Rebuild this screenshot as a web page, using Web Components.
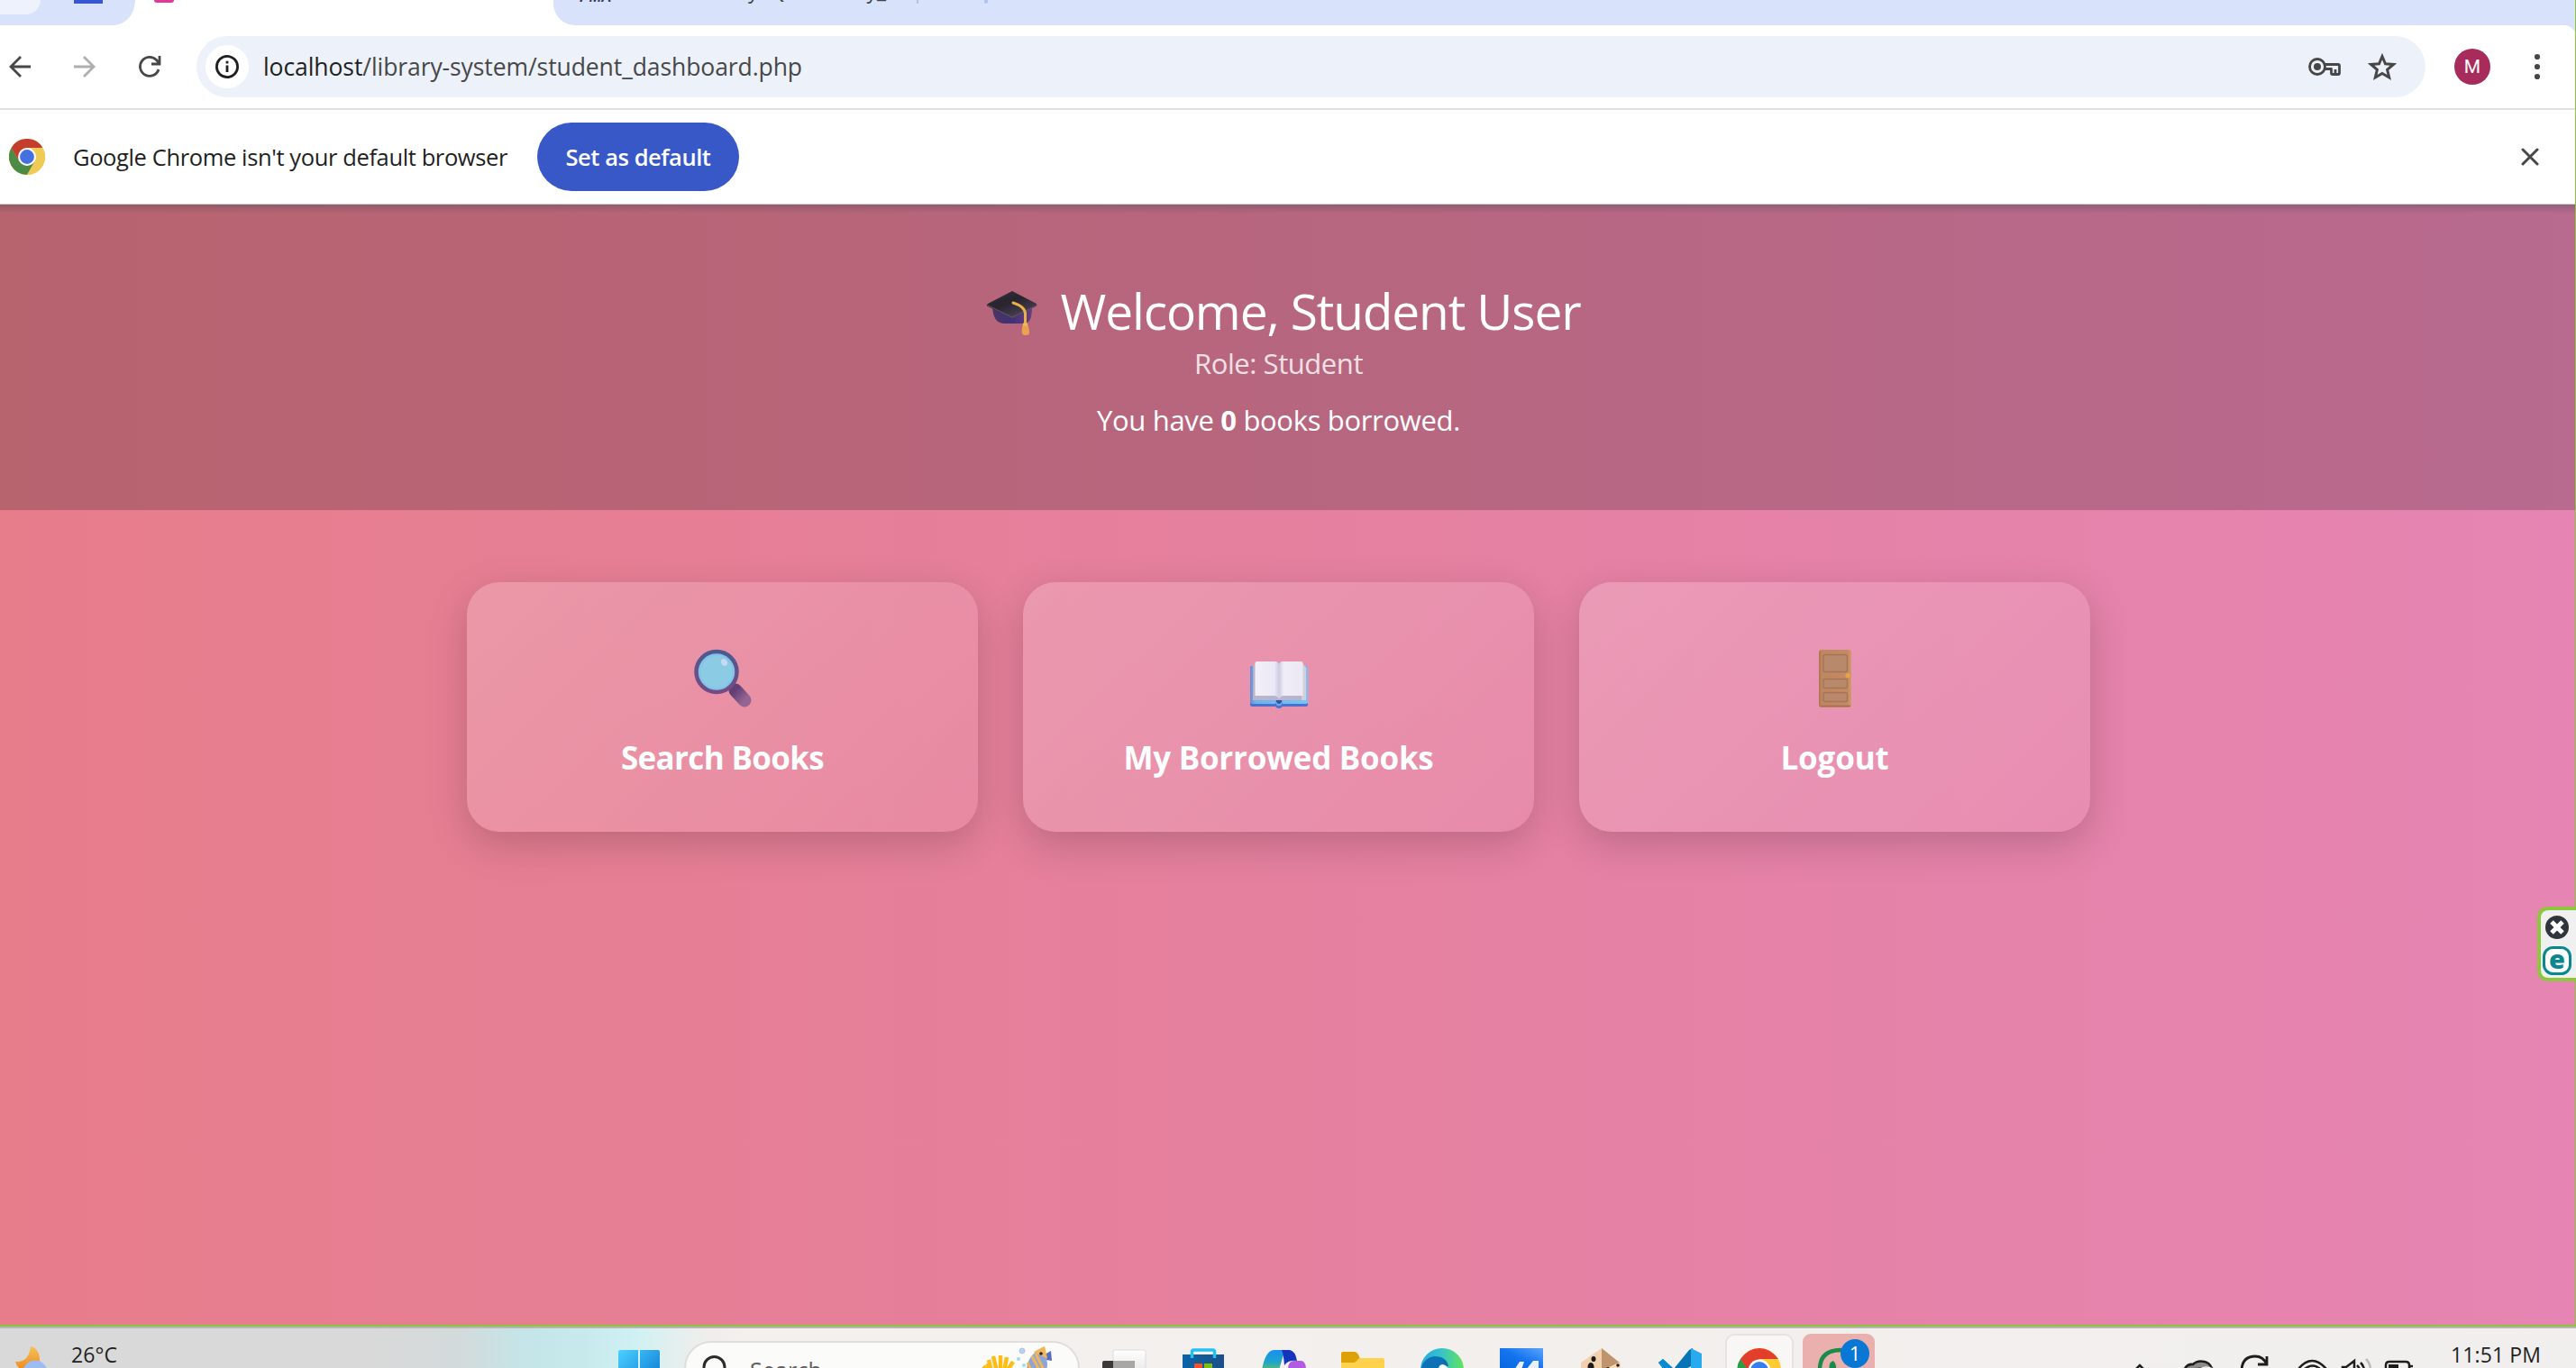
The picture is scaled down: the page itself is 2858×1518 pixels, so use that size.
<!DOCTYPE html>
<html lang="en">
<head>
<meta charset="utf-8">
<title>Student Dashboard</title>
<style>
html,body{margin:0;height:100%;overflow:hidden;font-family:"Open Sans","Noto Sans",sans-serif;color:#1f1f1f}
</style>
</head>
<body>
<desktop-screen></desktop-screen>
<script>
const define = (name, markup, ready) => {
  const t = document.createElement('template');
  t.innerHTML = markup;
  customElements.define(name, class extends HTMLElement {
    constructor() {
      super();
      this.attachShadow({mode: 'open'}).append(t.content.cloneNode(true));
    }
    connectedCallback() { if (ready) ready.call(this, this.shadowRoot); }
  });
};

/* Text tracked so that it fills the width given in its "w" attribute. */
define('fit-text', `<style>:host{display:inline-block;white-space:pre;flex:none}span{display:inline-block}</style><span><slot></slot></span>`,
function (root) {
  const s = root.querySelector('span'), w = +this.getAttribute('w');
  const fit = () => {
    s.style.letterSpacing = '0px';
    const n = this.textContent.length, d = (w - s.getBoundingClientRect().width) / n;
    s.style.letterSpacing = d + 'px';
    this.style.width = w + 'px';
  };
  fit();
  if (document.fonts && document.fonts.ready) document.fonts.ready.then(fit);
});

define('chrome-logo', `<style>:host{display:block;flex:none}svg{display:block;width:100%;height:100%}</style>
<svg viewBox="0 0 48 48"><circle cx="24" cy="24" r="24" fill="#e9c84e"/>
<path d="M3.200 12 13.600 30 24 36 34.400 30 24 48A24 24 0 0 1 3.200 12Z" fill="#4b8b46"/>
<path d="M3.200 12A24 24 0 0 1 44.800 12H24L13.600 30Z" fill="#c43d2d"/><path d="M44.800 12A24 24 0 0 1 24 48L34.400 30 24 12Z" fill="#efcb56"/>
<circle cx="24" cy="24" r="12" fill="#fff"/><circle cx="24" cy="24" r="9.500" fill="#4570e0"/></svg>`);

define('tab-strip', `<style>
:host{display:flex;height:28px;background:#fff;overflow:hidden;justify-content:space-between}
.l{width:150px;height:28px;background:#d8e2fb;border-bottom-right-radius:24px 28px;display:flex;align-items:flex-start}
.chip{width:45px;height:16px;background:#edf2fd;border-radius:0 0 20px 0}
.blue{width:32px;height:4px;background:#3a57d3;margin-left:37px}
.mid{width:464px;display:flex}
.pink{width:22px;height:3px;border-radius:0 0 8px 8px;background:#e5379a;margin-left:21px}
.r{flex:1;height:28px;background:#d8e2fb;border-bottom-left-radius:24px;display:flex;align-items:flex-start;padding-left:29px}
.pma{font:italic bold 16px/20px "Liberation Sans",sans-serif;color:#3d3557;margin-top:-13px;width:50px}
.t{font-size:23px;line-height:30px;margin-top:-26px;color:#444}
.sep{width:2px;height:4px;background:#b5c3e4;margin-left:34px}.dot{width:4px;height:4px;background:#adc5f5;border-radius:0 0 2px 2px;margin-left:73px}
</style>
<div class="l"><div class="chip"></div><div class="blue"></div></div>
<div class="mid"><div class="pink"></div></div>
<div class="r"><span class="pma">PMA</span><fit-text class="t" w="290">localhost / MySQL / library_</fit-text><i class="sep"></i><i class="dot"></i></div>`);

define('browser-toolbar', `<style>
:host{display:block;background:#d8e2fb}
.bar{display:flex;align-items:center;height:92px;box-sizing:border-box;background:#fff;border-radius:0 13px 0 0;padding:0 0 0 10px}
svg{display:block;flex:none;overflow:visible;fill:none;stroke:#474747;stroke-width:2.800}
.nav{display:flex;gap:48px;width:208px}
.omni{display:flex;align-items:center;height:68px;width:2473px;box-sizing:border-box;border-radius:34px;background:#edf2fa;padding:0 32px 0 10px}
.info{width:48px;height:48px;border-radius:50%;background:#fff;display:grid;place-items:center;margin-right:16px}
.url{font-size:26.500px;line-height:40px;color:#474747}.url b{font-weight:400;color:#1f1f1f}
.sp{flex:1}
.av{width:40px;height:40px;border-radius:50%;background:#a82c5b;color:#fff;font:21px/41px Roboto,sans-serif;text-align:center;margin-left:32px}
.dots{margin-left:48px}
</style>
<div class="bar">
<div class="nav">
<svg width="24" height="24" viewBox="0 0 24 24"><path d="M24 12H2M13 1 2 12l11 11"/></svg>
<svg width="24" height="24" viewBox="0 0 24 24" style="stroke:#aeaeae"><path d="M0 12h22M11 1l11 11-11 11"/></svg>
<svg width="24" height="24" viewBox="0 0 24 24"><path d="M22 15a10.500 10.500 0 1 1-2.500-10.500L23 8.500M23 0v9h-9"/></svg>
</div>
<div class="omni"><div class="info"><svg width="26" height="26" viewBox="0 0 26 26" style="stroke:#1f1f1f"><circle cx="13" cy="13" r="11.600"/><path d="M13 11.500V19M13 6.800v2.800"/></svg></div>
<fit-text class="url" w="598"><b>localhost</b>/library-system/student_dashboard.php</fit-text><span class="sp"></span>
<svg width="36" height="20" viewBox="0 0 36 20" stroke-linejoin="round"><circle cx="10" cy="10" r="8.500"/><circle cx="10" cy="10" r="4" fill="#474747" stroke="none"/><path d="M17.500 7.500H33a1.500 1.500 0 0 1 1.500 1.500v8a1.500 1.500 0 0 1-1.500 1.500h-6a1.500 1.500 0 0 1-1.500-1.500v-4.500h-8M30 13v5" /></svg>
<svg width="32" height="30" viewBox="0 0 32 30" style="margin-left:30px;stroke-width:3"><path d="m16 3.500 3.500 8.300 9 .7-6.900 5.800 2.100 8.700-7.700-4.600-7.700 4.600 2.100-8.700-6.900-5.800 9-.7Z"/></svg>
</div>
<div class="av">M</div>
<svg class="dots" width="8" height="30" viewBox="0 0 8 30" style="stroke:none;fill:#474747"><circle cx="4" cy="4" r="3.100"/><circle cx="4" cy="15" r="3.100"/><circle cx="4" cy="26" r="3.100"/></svg>
</div>`);

define('info-bar', `<style>
:host{display:flex;align-items:center;height:107px;box-sizing:border-box;background:#fff;border-top:2px solid #e0e0e0;border-bottom:1px solid #d0cfd0;padding:0 41px 0 10px}
chrome-logo{width:40px;height:40px;margin-right:31px}
.m{font-size:25.500px;line-height:36px}
.b{margin-left:33px;width:224px;height:76px;border-radius:38px;background:#3858c8;color:#fff;display:flex;align-items:center;justify-content:center;font-size:25.500px;font-weight:600}
svg{margin-left:auto;stroke:#474747;stroke-width:3;stroke-linecap:round}
</style><chrome-logo></chrome-logo><fit-text class="m" w="482">Google Chrome isn't your default browser</fit-text>
<div class="b"><fit-text w="161">Set as default</fit-text></div>
<svg width="20" height="20" viewBox="0 0 20 20"><path d="M2 2 18 18M18 2 2 18"/></svg>`);

define('welcome-header', `<style>
:host{display:flex;flex-direction:column;align-items:center;height:339px;box-sizing:border-box;padding:80px 21px 0 0;color:#fff;
background:linear-gradient(rgba(60,70,80,.3),transparent 10px),rgba(0,0,0,.2)}
.h{display:flex;align-items:center;height:76px;font-size:55px;line-height:76px;padding-left:11px}
.h svg{width:56px;height:50px;margin:6px 26px 0 0;overflow:visible}
.role{font-size:31px;line-height:40px;opacity:.8}
.n{font-size:31px;line-height:42px;margin-top:22px}
</style>
<div class="h"><svg viewBox="0 0 56 50"><defs><linearGradient id="c" x2="1"><stop stop-color="#4b3563"/><stop offset=".5" stop-color="#413176"/><stop offset="1" stop-color="#66407e"/></linearGradient><linearGradient id="k" x2=".7" y2="1"><stop stop-color="#303039"/><stop offset=".5" stop-color="#29242f"/><stop offset="1" stop-color="#4d4257"/></linearGradient></defs>
<path d="M6 18h44c0 13-3 18-10 18H20C10 36 7 29 6 18Z" fill="url(#c)"/><path d="M28 0 55 14q1 2-1 3L30 29q-2 1-4 0L1 17q-2-1 0-3Z" fill="url(#k)"/><path d="M1 16 28 29 55 16" fill="none" stroke="#5c5162" stroke-width="1.200"/>
<path d="M29 13q13 4 13.500 12v13" fill="none" stroke="#e6b247" stroke-width="3" stroke-linecap="round"/><path d="M40 37h5q3 7 1.500 11-4 2-7 0-2-4 .5-11Z" fill="#eda052"/><path d="M40 37h5" stroke="#e9c153" stroke-width="3"/></svg>
<fit-text w="577">Welcome, Student User</fit-text></div>
<fit-text class="role" w="187">Role: Student</fit-text>
<fit-text class="n" w="403">You have <b>0</b> books borrowed.</fit-text>`);

define('menu-card', `<style>
:host{display:flex;flex-direction:column;align-items:center;flex:1;height:277px;box-sizing:border-box;padding-top:75px;border-radius:36px;
background:linear-gradient(135deg,rgba(255,255,255,.2),rgba(255,255,255,.08));box-shadow:0 14px 44px rgba(0,0,0,.18);color:#fff}
::slotted(svg){display:block;width:64px;height:64px;overflow:visible}
.t{font-size:35px;line-height:50px;font-weight:700;margin-top:31px}
</style><slot></slot><div class="t"><slot name="label"></slot></div>`);

define('dashboard-page', `<style>
:host{display:block;flex:1;background:linear-gradient(90deg,#e77d8b,#e5809f 50%,#e685b3)}
.cards{display:flex;gap:50px;margin:80px 0 0 518px;width:1801px}
</style>
<welcome-header></welcome-header>
<div class="cards">
<menu-card><svg viewBox="0 0 64 64"><defs><linearGradient id="r" y2="1" x2="0"><stop stop-color="#4c5a8e"/><stop offset="1" stop-color="#754b84"/></linearGradient><linearGradient id="h" y2="1"><stop stop-color="#623f74"/><stop offset="1" stop-color="#946594"/></linearGradient><radialGradient id="g"><stop offset=".75" stop-color="#8bcbe4"/><stop offset="1" stop-color="#78b2ef"/></radialGradient></defs>
<path d="m46 45 10 11" stroke="url(#h)" stroke-width="15" stroke-linecap="round"/><circle cx="25" cy="24.500" r="22.500" fill="url(#g)" stroke="url(#r)" stroke-width="4.500"/><ellipse cx="33.500" cy="14" rx="3.300" ry="4" fill="#c5d9f1" transform="rotate(-30 33.500 14)"/></svg><fit-text slot="label" w="225">Search Books</fit-text></menu-card>
<menu-card><svg viewBox="0 0 64 64"><defs><linearGradient id="p"><stop stop-color="#f2effa"/><stop offset=".8" stop-color="#ece9f7"/><stop offset="1" stop-color="#cfcbe3"/></linearGradient><linearGradient id="q"><stop stop-color="#cfcbe3"/><stop offset=".2" stop-color="#f0edf9"/><stop offset="1" stop-color="#ebe8f4"/></linearGradient><linearGradient id="o"><stop stop-color="#718bd1"/><stop offset=".1" stop-color="#70b2ed"/><stop offset="1" stop-color="#74c5f5"/></linearGradient></defs>
<rect y="18" width="64" height="45" rx="2" fill="#4c70cf"/><rect y="18" width="64" height="42" rx="2" fill="url(#o)"/><path d="M3 18 6 15H58l3 4V56H3Z" fill="#b8b4cc"/><path d="M58 15 62 20V56H57Z" fill="#d3ced9"/>
<path d="M5.500 15q0-2 2-2H29q3 1 3 4V55q-2-4-5-4H5.500Z" fill="url(#p)"/><path d="M58.500 15q0-2-2-2H35q-3 1-3 4V55q2-4 5-4H58.500Z" fill="url(#q)"/><circle cx="32" cy="61" r="4" fill="#4c70cf"/><circle cx="32" cy="59" r="3.300" fill="#69a9eb"/><path d="M28.500 56h7q-1 4-3.500 4t-3.500-4Z" fill="#34539f"/></svg><fit-text slot="label" w="344">My Borrowed Books</fit-text></menu-card>
<menu-card><svg viewBox="0 0 64 64"><defs><linearGradient id="d"><stop stop-color="#ab724d"/><stop offset=".08" stop-color="#bd8761"/><stop offset=".9" stop-color="#c48b62"/><stop offset="1" stop-color="#cf9e6d"/></linearGradient></defs><rect x="14" width="36" height="64" rx="3" fill="url(#d)"/><path d="M16 62.500h33" stroke="#a96d53" stroke-width="1.500"/><g fill="#b9896b" stroke="#a9735a" stroke-width="1.400"><rect x="19" y="5.500" width="26.500" height="19" rx="2"/><rect x="19" y="32.500" width="26.500" height="10" rx="2"/><rect x="19" y="47.500" width="26.500" height="10" rx="2"/></g><circle cx="46" cy="28.500" r="2.600" fill="#eaa63e"/></svg><fit-text slot="label" w="120">Logout</fit-text></menu-card>
</div>`);

define('eset-badge', `<style>:host{position:absolute;right:0;top:1006px;width:43px;height:83px}svg{display:block}text{font:900 29px "Open Sans",sans-serif}</style>
<svg width="43" height="83" viewBox="0 0 43 83"><path d="M46 2H13Q2 2 2 13V70Q2 81 13 81H46Z" fill="#f0f0f0" stroke="#8dc63f" stroke-width="4"/><circle cx="22" cy="23" r="13" fill="#30343b"/><path d="m16 17 12 12m0-12L16 29" stroke="#fff" stroke-width="5"/><rect x="7.500" y="45.500" width="29" height="29" rx="10" fill="#fff" stroke="#0b8790" stroke-width="3"/><text x="22" y="68.500" text-anchor="middle" fill="#0b8790">e</text></svg>`);

define('task-bar', `<style>
:host{display:flex;height:48px;box-sizing:border-box;border-top:2px solid #8bc53f;overflow:hidden}
.in{display:flex;flex:1;align-items:flex-start;border-top:2px solid #b7b4b3;background:linear-gradient(90deg,#d9d9d9 0 410px,#d3dadb 510px,#c4e5e8 580px,#c8eaec 650px,#cff1f3 705px,#e2efef 745px,#efeeec 785px,#f3f0ed 830px,#f2efec 1500px,#f1efee)}
svg{display:block;flex:none}
.w{width:53px;height:44px;margin-right:26px}
.t{font-size:23px;line-height:30px;margin-top:14px}
.s{display:flex;align-items:flex-start;width:439px;height:60px;box-sizing:border-box;margin:14px 4px 0 6px;border:2px solid #e0dddc;border-radius:30px;background:#fbfbfa;flex:none}
.s .q{margin-left:18px}.s fit-text{font-size:25px;line-height:34px;color:#5f5f5f;margin:13px 0 0 23px}
.s .fish{margin-left:auto;margin-right:24px}
text{font:22px "Open Sans",sans-serif}
</style><div class="in">
<svg class="w" viewBox="0 0 53 44"><defs><linearGradient id="m" y2="1" x2="0"><stop stop-color="#f4c05a"/><stop offset="1" stop-color="#ef8a1b"/></linearGradient></defs><path d="M34 20q9 2 10 13t-12 14Q20 48 17 37q15 1 17-17Z" fill="url(#m)"/><circle cx="39" cy="49" r="13.500" fill="#9dbcf4"/></svg>
<fit-text class="t" w="51">26°C</fit-text>
<svg width="88" height="44" viewBox="0 0 88 44" style="margin-left:535px"><defs><linearGradient id="wn" gradientUnits="userSpaceOnUse" x1="21" y1="24" x2="66" y2="68"><stop stop-color="#4cd1ff"/><stop offset="1" stop-color="#0670cf"/></linearGradient></defs><path d="M23 24h20v22H21V26q0-2 2-2ZM45 24h20q2 0 2 2v20H45Z" fill="url(#wn)"/></svg>
<div class="s"><svg class="q" width="30" height="44" viewBox="0 0 30 44"><circle cx="13.500" cy="27" r="11.500" fill="none" stroke="#2b2b2b" stroke-width="3"/></svg><fit-text w="80">Search</fit-text>
<svg class="fish" width="84" height="30" viewBox="0 0 84 30"><g stroke="#fdbc16" stroke-width="4.500"><path d="m14 32-7-9M18 32 14 15M22 32 22 14M26 32l3-16M29 32l7-11M9 32 3 26M12 32 9 19"/></g><circle cx="46" cy="9" r="3" fill="#a9dce8" stroke="#c8b5e6"/><circle cx="42" cy="18" r="2" fill="#9bdcea"/><circle cx="48" cy="25" r="2" fill="#9bdcea"/><path d="M71 13 78 9 79 20 73 19Z" fill="#596ebc"/><path d="M51 30Q52 12 70 6l2 9q4 9 0 17H51Z" fill="#8ea5d8"/><path d="M62 10 70 6l2 9ZM57 15l9 17M52 22l5 10M61 12l10 20" fill="#efbd62" stroke="#efb65a" stroke-width="3"/><circle cx="67" cy="12" r="1.800" fill="#222"/></svg></div>
<svg width="880" height="44" viewBox="0 0 880 44"><defs>
<linearGradient id="a1" x2="0" y2="1"><stop stop-color="#fff"/><stop offset="1" stop-color="#ddd"/></linearGradient><linearGradient id="a2"><stop stop-color="#0b64a8"/><stop offset="1" stop-color="#1c4f87"/></linearGradient><linearGradient id="a3" y2="1" x2="0"><stop stop-color="#1b8df0"/><stop offset=".6" stop-color="#1da5cf"/><stop offset="1" stop-color="#62b968"/></linearGradient><linearGradient id="a4"><stop stop-color="#25a9df"/><stop offset=".45" stop-color="#35c1ce"/><stop offset="1" stop-color="#63e35b"/></linearGradient><linearGradient id="a5" x1="0" y1="1" x2="1" y2="0"><stop stop-color="#0765df"/><stop offset=".5" stop-color="#1473ef"/><stop offset="1" stop-color="#5ba4fb"/></linearGradient></defs>
<rect x="33" y="24" width="36" height="36" rx="2" fill="url(#a1)" stroke="#dedede"/><rect x="21" y="36" width="36" height="24" rx="2" fill="#3b3a39"/><path d="M33 36H55q2 0 2 2v10H33Z" fill="#a9a7a5"/>
<path d="M110 29h46v20h-46Z" fill="url(#a2)"/><path d="M120.500 33V26q0-2 2-2h21q2 0 2 2v7" fill="none" stroke="#25c0f4" stroke-width="3.500"/><path d="M123 39h9v6h-9Z" fill="#f35325"/><path d="M134 39h9v6h-9Z" fill="#81bc06"/>
<path d="M198 46Q202 24 212 24H228Q222 26 220 36L217 46Z" fill="url(#a3)"/><path d="M220 24h9q6 1 8 12-10-1-14 5-1-13-3-17Z" fill="#1533bd"/><path d="M227 46q0-10 7-10h8q5 1 5 10Z" fill="#b15be1"/>
<path d="M286 46V28q0-2 2-2h13q2 0 4 3l2 5v12Z" fill="#dda006"/><path d="M286 38h14q2 0 4-3 1-2 4-2h24q2 0 2 2v11h-48Z" fill="#ffd14c"/>
<circle cx="398" cy="46" r="24" fill="url(#a4)"/><path d="M374 48q2-15 15-17 14 0 16 11h-7q-6 1-6 9Z" fill="#0e71b5"/><path d="M394 46q0-6 5-6 5 1 6 6Z" fill="#fff"/>
<path d="M462 22h48v24h-48Z" fill="url(#a5)"/><path d="M478 46l6-9h5l-3 9ZM491 46l8-10h6v10Z" fill="#e9f0fc"/>
<path d="M575 22 552 38v10h25Z" fill="#f2d0ae"/><path d="M575 22 596 39v8H575Z" fill="#bf946d"/><path d="M577 46 596 37v10H576Z" fill="#f5dabc"/><g fill="#1b1b1b"><ellipse cx="566" cy="34" rx="2.500" ry="3"/><ellipse cx="563" cy="43" rx="3.500" ry="5"/><circle cx="582" cy="45" r="2"/><circle cx="593" cy="41" r="1.800"/></g>
<path d="M638 38l5-4 12 11 17-21 4-2v19l-15 8h-14Z" fill="#0874b6"/><path d="M638 38l5-4 13 12h-12Z" fill="#098bd0"/><path d="M674 22 686 28V48H674Z" fill="#29a9ee"/>
<rect x="713" y="7" width="74" height="50" rx="9" fill="#f8f7f6" stroke="#e7e3e1" stroke-width="2"/><circle cx="750" cy="46" r="24" fill="#fccb32"/><path d="M729 34q-5 7-3 14h14Z" fill="#2b9b47"/><path d="M729 34Q738 22 750 22t21 12H750L738 47Z" fill="#e33e2c"/><circle cx="750" cy="47" r="12.500" fill="#fff"/><circle cx="750" cy="47" r="10" fill="#3a7ded"/>
<rect x="798" y="6" width="80" height="55" rx="9" fill="#eab0ad"/><path d="M817 46q0-21 22-22 12 0 20 8" fill="none" stroke="#1b8b4c" stroke-width="4.500"/><path d="M828 46q-2-8 4-10 5 5 2 10Z" fill="#1b8b4c"/><circle cx="856" cy="28" r="16" fill="#0878d4"/><text x="856" y="36" text-anchor="middle" fill="#fff">1</text></svg>
<svg width="328" height="44" viewBox="0 0 328 44" style="margin-left:278px" fill="none" stroke="#1d1d1d" stroke-width="2.500"><path d="m8 47 6-6 6 6"/><path d="M63 46q4-7 10-6 5-5 13-3 5 1 8 7Z" fill="#8b8b8b"/><path d="M77 48q7-9 18-4v5Z" fill="#eee" stroke="none"/><path d="M127 46q1-15 15-15 9 0 13 9M155 31v9h-10" stroke-width="2.800"/><path d="M190 45q15-18 31 0M197 45q9-7 17 0"/><path d="M239 46v-3h4l9-7v10M259 38q4 4 4 9M255 41q3 3 3 6"/><path d="M265 34q5 5 5 12" stroke="#bbb"/><path d="M287 46v-5q0-4 4-4h18q4 0 4 4v5"/><path d="M290 40h11v7h-11Z" fill="#1d1d1d" stroke="none"/><path d="M314 42h3"/></svg>
<fit-text class="t" w="100" style="margin-left:31px">11:51 PM</fit-text>
</div>`);

define('desktop-screen', `<style>
:host{display:flex;flex-direction:column;position:relative;width:2858px;height:1518px;overflow:hidden;background:#fff}
.edge{position:absolute;right:0;top:0;width:1px;height:1472px;background:#8dc63f}
</style><tab-strip></tab-strip><browser-toolbar></browser-toolbar><info-bar></info-bar><dashboard-page></dashboard-page><task-bar></task-bar><div class="edge"></div><eset-badge></eset-badge>`);
</script>
</body>
</html>
